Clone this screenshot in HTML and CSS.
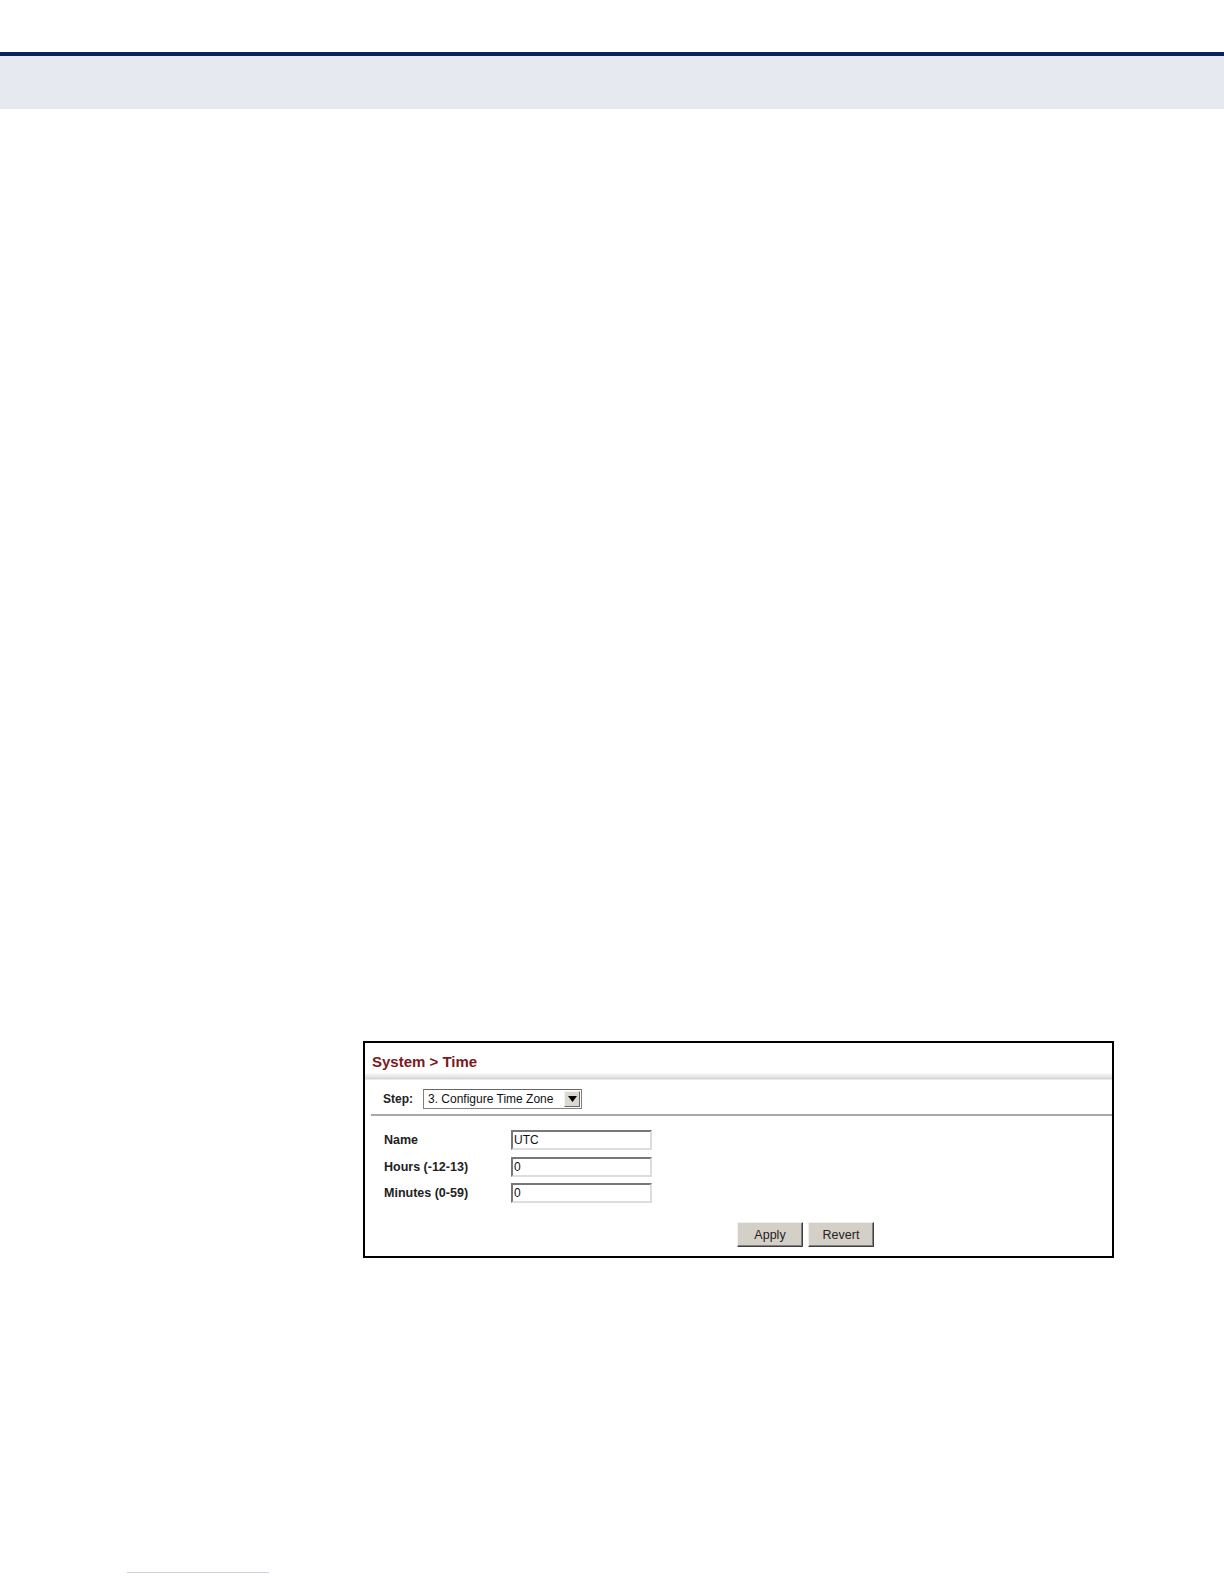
FILE: index.html
```html
<!DOCTYPE html>
<html>
<head>
<meta charset="utf-8">
<link rel="stylesheet" href="styles.css">
</head>
<body>
<div class="header">
  <div class="header-bar"></div>
  <div class="header-band"></div>
</div>
<div class="content">
  <div class="panel">
    <div class="panel-title">System &gt; Time</div>
    <div class="title-rule"></div>
    <div class="step-row">
      <span class="step-label">Step:</span>
      <div class="select">
        <span class="select-text">3. Configure Time Zone</span>
        <span class="select-btn"><svg width="9" height="6" viewBox="0 0 9 6"><path d="M0 0H9L4.5 6Z" fill="#000"/></svg></span>
      </div>
    </div>
    <div class="step-rule"></div>
    <div class="form">
      <div class="form-row"><span class="label">Name</span><span class="input">UTC</span></div>
      <div class="form-row"><span class="label">Hours (-12-13)</span><span class="input">0</span></div>
      <div class="form-row"><span class="label">Minutes (0-59)</span><span class="input">0</span></div>
    </div>
    <div class="buttons">
      <span class="btn">Apply</span>
      <span class="btn">Revert</span>
    </div>
  </div>
</div>
<div class="footer">
  <div class="footer-line"></div>
</div>
</body>
</html>
```
FILE: styles.css
```css
html, body {
  margin: 0;
  padding: 0;
  background: #fff;
  font-family: "Liberation Sans", Arial, sans-serif;
}
.header {
  padding-top: 52px;
}
.header-bar {
  height: 4px;
  background: #0b2260;
}
.header-band {
  height: 53px;
  background: #e6e9f0;
}
.content {
  padding-top: 932px;
  padding-left: 363px;
}
.panel {
  width: 747px;
  height: 213px;
  border: 2px solid #000;
  display: flex;
  flex-direction: column;
}
.panel-title {
  height: 30px;
  box-sizing: border-box;
  padding: 10px 0 0 7px;
  font-size: 15px;
  font-weight: bold;
  color: #7a1a1d;
  line-height: 18px;
}
.title-rule {
  height: 7px;
  background: linear-gradient(#fafafa, #e2e2e2 60%, #d6d6d6 80%, #f6f6f6);
}
.step-row {
  display: flex;
  align-items: center;
  padding: 9px 0 5px 18px;
  height: 20px;
}
.step-label {
  font-size: 12px;
  font-weight: bold;
  color: #222;
  width: 40px;
}
.select {
  width: 157px;
  height: 18px;
  border: 1px solid #808080;
  border-top-color: #666;
  display: flex;
  align-items: center;
  background: #fff;
}
.select-text {
  flex: 1;
  font-size: 12px;
  color: #111;
  padding-left: 4px;
}
.select-btn {
  width: 16px;
  height: 16px;
  margin-right: 1px;
  background: #dcd8d0;
  border: 1px solid;
  border-color: #f4f4f4 #666 #666 #f4f4f4;
  box-sizing: border-box;
  display: flex;
  align-items: center;
  justify-content: center;
}
.step-rule {
  margin-left: 6px;
  height: 2px;
  background: #a8a8a8;
}
.form {
  padding: 14px 0 0 19px;
  display: flex;
  flex-direction: column;
  gap: 6.5px;
}
.form-row {
  display: flex;
  align-items: center;
  height: 20px;
}
.label {
  width: 127px;
  font-size: 12.5px;
  font-weight: bold;
  color: #222;
}
.input {
  width: 141px;
  height: 20px;
  box-sizing: border-box;
  border: 2px solid;
  border-color: #777 #ddd #ddd #777;
  font-size: 12px;
  line-height: 16px;
  padding-left: 1px;
  color: #111;
}
.buttons {
  display: flex;
  gap: 5px;
  padding: 19px 0 0 372px;
}
.btn {
  width: 66px;
  height: 25px;
  box-sizing: border-box;
  background: #d4d0c8;
  border: 1px solid;
  border-color: #f0f0f0 #404040 #404040 #f0f0f0;
  box-shadow: inset -1px -1px 0 #808080;
  font-size: 12.5px;
  color: #222;
  display: flex;
  align-items: center;
  justify-content: center;
}
.footer {
  padding-top: 314px;
  padding-left: 127px;
}
.footer-line {
  width: 142px;
  height: 1px;
  background: #c9d1ea;
}
```
